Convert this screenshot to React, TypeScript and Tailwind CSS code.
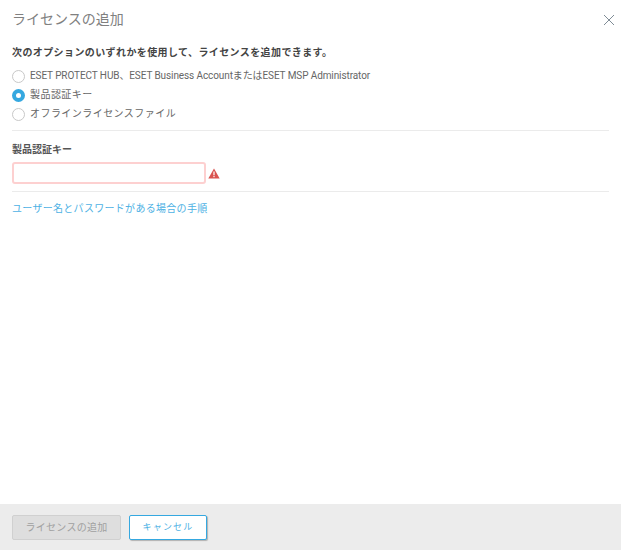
import React from 'react';

const font = 'font-["Roboto","Noto_Sans_CJK_JP",sans-serif]';

function Radio({ label, checked, tight }: { label: string; checked?: boolean; tight?: boolean }) {
  return (
    <label className="flex h-[19px] items-center gap-[5px]">
      {checked ? (
        <span className="mt-[2px] flex h-[13px] w-[13px] items-center justify-center rounded-full bg-[#35a8e0]">
          <span className="h-[5px] w-[5px] rounded-full bg-white" />
        </span>
      ) : (
        <span className="mt-[2px] h-[13px] w-[13px] rounded-full border border-[#c8c8c8] bg-white" />
      )}
      <span className={`text-[10px] leading-[14px] text-[#666] ${tight ? 'tracking-[-0.1px]' : 'tracking-[0.45px]'}`}>{label}</span>
    </label>
  );
}

export default function App() {
  return (
    <div className={`flex h-[550px] w-[621px] flex-col bg-white ${font}`}>
      {/* Header */}
      <div className="flex h-[39px] items-center justify-between pl-3 pr-[6px]">
        <h1 className="text-[14px] font-normal tracking-[0px] text-[#808080]">ライセンスの追加</h1>
        <svg width="12" height="12" viewBox="0 0 12 12" className="text-[#7f8c96]">
          <path d="M1 1l10 10M11 1L1 11" stroke="currentColor" strokeWidth="1" fill="none" />
        </svg>
      </div>

      {/* Body */}
      <div className="flex-1 px-3 pt-[7px]">
        <p className="text-[10px] leading-[14px] font-bold tracking-[0.4px] text-[#444]">
          次のオプションのいずれかを使用して、ライセンスを追加できます。
        </p>
        <div className="mt-[6px] flex flex-col">
          <Radio label="ESET PROTECT HUB、ESET Business AccountまたはESET MSP Administrator" tight />
          <Radio label="製品認証キー" checked />
          <Radio label="オフラインライセンスファイル" />
        </div>
        <div className="mt-[7px] border-t border-[#ebebeb] pt-3">
          <div className="text-[10px] leading-[14px] font-bold text-[#555]">製品認証キー</div>
          <div className="mt-[5px] flex items-center gap-[2px]">
            <input className="h-[22px] w-[194px] rounded-[3px] border-2 border-[#fdd0d0] bg-white" />
            <svg width="12" height="11" viewBox="0 0 12 11">
              <path d="M6 0.5L11.7 10.5H0.3Z" fill="#d9534f" />
              <rect x="5.4" y="3.5" width="1.2" height="3.8" fill="#fff" />
              <rect x="5.4" y="8" width="1.2" height="1.2" fill="#fff" />
            </svg>
          </div>
        </div>
        <div className="mt-[7px] border-t border-[#ebebeb] pt-[10px]">
          <a className="block text-[10px] leading-[14px] tracking-[0.3px] text-[#4db1e4]">ユーザー名とパスワードがある場合の手順</a>
        </div>
      </div>

      {/* Footer */}
      <div className="flex h-[46px] items-center gap-2 bg-[#ececec] pl-3">
        <button className="h-[25px] w-[109px] rounded-[2px] border border-[#d0d0d0] bg-[#dedede] pt-[1px] text-[10px] tracking-[0.3px] text-[#a0a0a0]">
          ライセンスの追加
        </button>
        <button className="h-[25px] w-[78px] rounded-[2px] border border-[#35a8e0] bg-white pt-[2px] text-[9px] tracking-[1.2px] text-[#4db1e4] shadow-[1px_1px_1px_rgba(0,0,0,0.25)]">
          キャンセル
        </button>
      </div>
    </div>
  );
}
